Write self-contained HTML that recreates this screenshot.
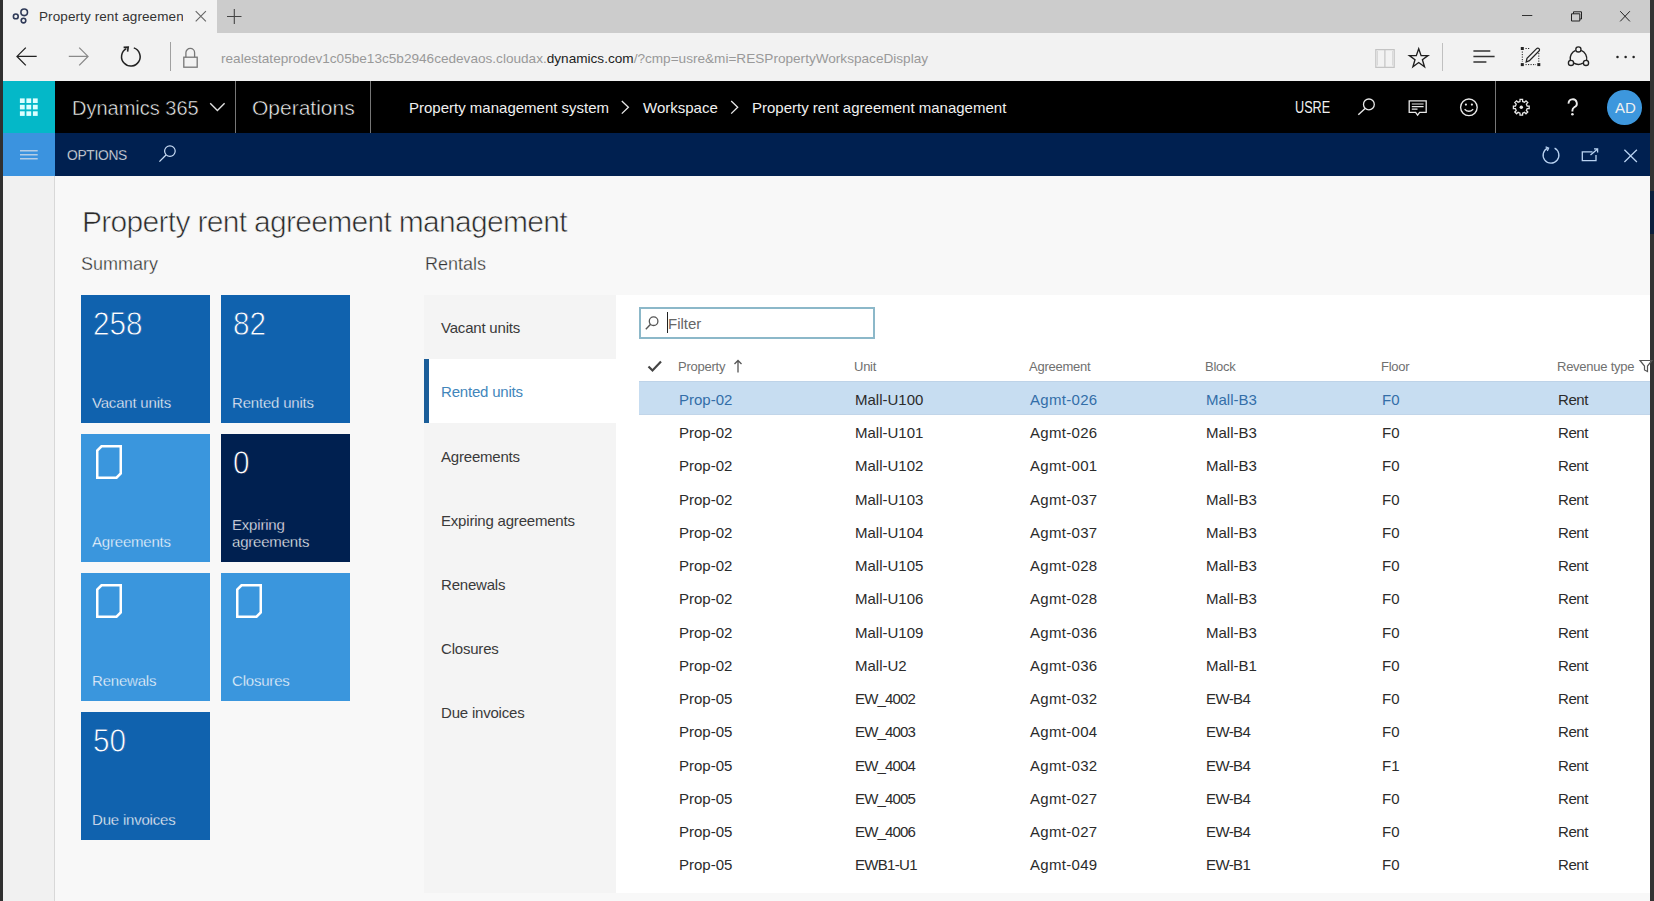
<!DOCTYPE html>
<html><head><meta charset="utf-8">
<style>
*{margin:0;padding:0;box-sizing:border-box}
html,body{width:1654px;height:901px;overflow:hidden;background:#f8f8f8;font-family:"Liberation Sans",sans-serif}
.a{position:absolute}
.t{position:absolute;white-space:nowrap;line-height:1}
svg{position:absolute;overflow:visible}
</style></head><body>
<!-- window borders -->
<div class="a" style="left:0;top:0;width:3px;height:901px;background:#303030"></div>
<div class="a" style="left:1650px;top:0;width:4px;height:901px;background:#333"></div>

<div class="a" style="left:1650px;top:191px;width:4px;height:43px;background:#0c1f3d"></div>
<!-- tab bar -->
<div class="a" style="left:3px;top:0;width:1647px;height:33px;background:#cccccc"></div>
<div class="a" style="left:3px;top:0;width:214px;height:33px;background:#f2f2f2"></div>
<div class="t" style="left:39px;top:9.6px;font-size:13.5px;color:#333;letter-spacing:0.1px;width:144px;height:16px;overflow:hidden">Property rent agreement management</div>

<!-- address bar -->
<div class="a" style="left:3px;top:33px;width:1647px;height:48px;background:#f2f2f2"></div>
<div class="t" style="left:221px;top:51.6px;font-size:13.6px;color:#999">realestateprodev1c05be13c5b2946cedevaos.cloudax.<span style="color:#222">dynamics.com</span>/?cmp=usre&amp;mi=RESPropertyWorkspaceDisplay</div>


<!-- tab icons -->
<svg width="20" height="20" style="left:10px;top:6px" viewBox="10 6 20 20"><circle cx="15.8" cy="16.4" r="2.4" fill="none" stroke="#2f3a58" stroke-width="1.6"/><circle cx="24.2" cy="12.3" r="3.3" fill="none" stroke="#2f3a58" stroke-width="1.6"/><circle cx="23.5" cy="20.6" r="2.3" fill="none" stroke="#2f3a58" stroke-width="1.6"/></svg>
<svg width="20" height="20" style="left:190px;top:6px" viewBox="190 6 20 20"><path d="M195.7 11.2 L205.9 21.4 M205.9 11.2 L195.7 21.4" stroke="#666" stroke-width="1.1"/></svg>
<svg width="20" height="20" style="left:224px;top:6px" viewBox="224 6 20 20"><path d="M234.3 9 V24 M227 16.5 H241.5" stroke="#444" stroke-width="1.1"/></svg>
<svg width="20" height="20" style="left:1518px;top:6px" viewBox="1518 6 20 20"><path d="M1522 15.5 H1532.3" stroke="#333" stroke-width="1"/></svg>
<svg width="20" height="20" style="left:1566px;top:6px" viewBox="1566 6 20 20"><path d="M1571.5 13.8 H1579.8 V21 H1571.5 Z" fill="none" stroke="#222" stroke-width="1"/><path d="M1573.5 13.8 V11.8 H1581.5 V19 H1579.8" fill="none" stroke="#222" stroke-width="1"/></svg>
<svg width="20" height="20" style="left:1615px;top:6px" viewBox="1615 6 20 20"><path d="M1620.2 11.2 L1629.9 21.4 M1629.9 11.2 L1620.2 21.4" stroke="#222" stroke-width="1"/></svg>

<!-- address bar icons -->
<svg width="30" height="30" style="left:12px;top:42px" viewBox="12 42 30 30"><path d="M36.7 56.4 H17.3 M25.8 47.6 L17 56.4 L25.8 65.4" fill="none" stroke="#222" stroke-width="1.3"/></svg>
<svg width="30" height="30" style="left:64px;top:42px" viewBox="64 42 30 30"><path d="M68.8 56.4 H88 M79.2 47.6 L88 56.4 L79.2 65.4" fill="none" stroke="#8a8a8a" stroke-width="1.3"/></svg>
<svg width="30" height="30" style="left:116px;top:42px" viewBox="116 42 30 30"><path d="M133.8 47.9 A9.3 9.3 0 1 1 126.3 48.6" fill="none" stroke="#222" stroke-width="1.5"/><path d="M123.6 47.4 L128.2 47.2 L127.6 51.6" fill="none" stroke="#222" stroke-width="1.6"/></svg>
<div class="a" style="left:170px;top:42px;width:1px;height:29px;background:#a0a0a0"></div>
<svg width="20" height="26" style="left:180px;top:44px" viewBox="180 44 20 26"><rect x="183.8" y="57.2" width="13.4" height="10" fill="none" stroke="#777" stroke-width="1.3"/><path d="M185.9 57.2 V52.8 A4.35 4.35 0 0 1 194.6 52.8 V57.2" fill="none" stroke="#777" stroke-width="1.3"/></svg>

<svg width="24" height="24" style="left:1373px;top:46px" viewBox="1373 46 24 24"><path d="M1375.8 49.6 H1384.9 V67.3 H1375.8 Z M1384.9 49.6 H1394.2 V67.3 H1384.9 Z" fill="none" stroke="#c4c4c4" stroke-width="1.2"/><path d="M1377.5 51 V65.5 M1392.6 51 V65.5" stroke="#d8d8d8" stroke-width="1"/></svg>
<svg width="24" height="24" style="left:1406px;top:46px" viewBox="1406 46 24 24"><path d="M1418.7 48.8 L1421.1 55.6 L1428 55.6 L1422.4 59.8 L1424.5 66.8 L1418.7 62.5 L1412.9 66.8 L1415 59.8 L1409.4 55.6 L1416.3 55.6 Z" fill="none" stroke="#1e1e1e" stroke-width="1.35" stroke-linejoin="miter"/></svg>
<div class="a" style="left:1441.5px;top:42.5px;width:1px;height:28.5px;background:#c0c0c0"></div>
<svg width="26" height="20" style="left:1471px;top:46px" viewBox="1471 46 26 20"><path d="M1473.4 51 H1490.3 M1473.4 56.5 H1494.6 M1473.4 62 H1486.4" stroke="#333" stroke-width="1.5"/></svg>
<svg width="24" height="24" style="left:1518px;top:44px" viewBox="1518 44 24 24"><rect x="1520.8" y="47" width="3" height="3" fill="#222"/><rect x="1520.8" y="63.1" width="3" height="3" fill="#222"/><rect x="1537.3" y="63.1" width="3" height="3" fill="#222"/><path d="M1522.3 51.5 V62 M1525.5 64.6 H1536 M1538.8 53 V62 M1525.5 48.5 H1530" stroke="#222" stroke-width="1" stroke-dasharray="1.2 1.3"/><path d="M1526.2 62 L1527 58.2 L1536.6 48.6 A1.6 1.6 0 0 1 1539 51 L1529.4 60.6 Z" fill="none" stroke="#222" stroke-width="1.25"/></svg>
<svg width="30" height="30" style="left:1564px;top:44px" viewBox="1564 44 30 30"><path d="M1581.2 50.3 A9.2 9.2 0 0 1 1586.6 60.6 M1573.8 63.2 A9.2 9.2 0 0 0 1582.9 63.1 M1570.3 60.4 A9.2 9.2 0 0 1 1575.6 50.3" fill="none" stroke="#222" stroke-width="1.4"/><circle cx="1578.4" cy="49.4" r="2.6" fill="#f2f2f2" stroke="#222" stroke-width="1.35"/><circle cx="1571" cy="62.9" r="2.6" fill="#f2f2f2" stroke="#222" stroke-width="1.35"/><circle cx="1586" cy="62.9" r="2.6" fill="#f2f2f2" stroke="#222" stroke-width="1.35"/></svg>
<svg width="24" height="10" style="left:1614px;top:52px" viewBox="1614 52 24 10"><circle cx="1617.5" cy="57" r="1.25" fill="#222"/><circle cx="1625.6" cy="57" r="1.25" fill="#222"/><circle cx="1633.6" cy="57" r="1.25" fill="#222"/></svg>

<!-- nav bar -->
<div class="a" style="left:3px;top:81px;width:1647px;height:52px;background:#000"></div>
<div class="a" style="left:3px;top:81px;width:51.5px;height:52px;background:#04b8c8"></div>
<div class="t" style="left:72px;top:98px;font-size:20px;color:#f4f4f4;-webkit-text-stroke:0.5px #000">Dynamics 365</div>
<div class="a" style="left:235px;top:81px;width:1px;height:52px;background:#777"></div>
<div class="t" style="left:252px;top:97.2px;font-size:21px;color:#f4f4f4;-webkit-text-stroke:0.5px #000">Operations</div>
<div class="a" style="left:370px;top:81px;width:1px;height:52px;background:#777"></div>
<div class="t" style="left:409px;top:100px;font-size:15px;color:#f0f0f0">Property management system</div>
<div class="t" style="left:643px;top:100px;font-size:15px;color:#f0f0f0">Workspace</div>
<div class="t" style="left:752px;top:100px;font-size:15px;color:#f0f0f0">Property rent agreement management</div>

<svg width="22" height="22" style="left:18px;top:96px" viewBox="18 96 22 22"><g fill="#dcffff"><rect x="19.9" y="98.4" width="4.8" height="4.6"/><rect x="26.4" y="98.4" width="4.8" height="4.6"/><rect x="32.9" y="98.4" width="4.8" height="4.6"/><rect x="19.9" y="104.8" width="4.8" height="4.6"/><rect x="26.4" y="104.8" width="4.8" height="4.6"/><rect x="32.9" y="104.8" width="4.8" height="4.6"/><rect x="19.9" y="111.3" width="4.8" height="4.6"/><rect x="26.4" y="111.3" width="4.8" height="4.6"/><rect x="32.9" y="111.3" width="4.8" height="4.6"/></g></svg>
<svg width="20" height="14" style="left:208px;top:100px" viewBox="208 100 20 14"><path d="M210.2 103.2 L217.4 110.4 L224.6 103.2" fill="none" stroke="#e0e0e0" stroke-width="1.4"/></svg>
<svg width="10" height="16" style="left:619px;top:99px" viewBox="619 99 10 16"><path d="M621.8 101 L628.4 107.3 L621.8 113.6" fill="none" stroke="#e8e8e8" stroke-width="1.3"/></svg>
<svg width="10" height="16" style="left:729px;top:99px" viewBox="729 99 10 16"><path d="M731.2 101 L737.7 107.3 L731.2 113.6" fill="none" stroke="#e8e8e8" stroke-width="1.3"/></svg>
<svg width="22" height="22" style="left:1356px;top:96px" viewBox="1356 96 22 22"><circle cx="1368.9" cy="104.4" r="5.4" fill="none" stroke="#e8e8e8" stroke-width="1.3"/><path d="M1365.1 108.4 L1358.3 114.8" stroke="#e8e8e8" stroke-width="1.4"/></svg>
<svg width="22" height="22" style="left:1406px;top:96px" viewBox="1406 96 22 22"><path d="M1409.2 100.8 H1426.2 V112.3 H1419.6 L1417.6 115.2 L1415.6 112.3 H1409.2 Z" fill="none" stroke="#e8e8e8" stroke-width="1.3"/><path d="M1411.8 104 H1423.6 M1411.8 106.6 H1423.6 M1411.8 109.1 H1417.5" stroke="#e8e8e8" stroke-width="1.1"/></svg>
<svg width="22" height="22" style="left:1458px;top:96px" viewBox="1458 96 22 22"><circle cx="1468.9" cy="107.3" r="8.3" fill="none" stroke="#e8e8e8" stroke-width="1.35"/><circle cx="1465.9" cy="104.6" r="1.1" fill="#e8e8e8"/><circle cx="1471.9" cy="104.6" r="1.1" fill="#e8e8e8"/><path d="M1464.6 109.2 Q1468.9 113.4 1473.2 109.2" fill="none" stroke="#e8e8e8" stroke-width="1.3"/></svg>
<svg width="22" height="22" style="left:1510px;top:96px" viewBox="1510 96 22 22"><path d="M1527.16 105.99 L1529.20 106.03 L1529.20 108.57 L1527.16 108.61 L1526.37 110.51 L1527.79 111.98 L1525.98 113.79 L1524.51 112.37 L1522.61 113.16 L1522.57 115.20 L1520.03 115.20 L1519.99 113.16 L1518.09 112.37 L1516.62 113.79 L1514.81 111.98 L1516.23 110.51 L1515.44 108.61 L1513.40 108.57 L1513.40 106.03 L1515.44 105.99 L1516.23 104.09 L1514.81 102.62 L1516.62 100.81 L1518.09 102.23 L1519.99 101.44 L1520.03 99.40 L1522.57 99.40 L1522.61 101.44 L1524.51 102.23 L1525.98 100.81 L1527.79 102.62 L1526.37 104.09 Z" fill="none" stroke="#e8e8e8" stroke-width="1.3"/><circle cx="1521.3" cy="107.3" r="1.7" fill="#e8e8e8"/></svg>
<svg width="16" height="20" style="left:1564px;top:97px" viewBox="1564 97 16 20"><path d="M1568.6 103.6 A4.1 4.1 0 1 1 1574.3 107.2 C1572.8 108.1 1572.4 109 1572.4 110.6 V111.6" fill="none" stroke="#ececec" stroke-width="1.9"/><circle cx="1572.4" cy="114.2" r="1.3" fill="#ececec"/></svg>
<div class="t" style="left:1295px;top:99.5px;font-size:16px;color:#f0f0f0;transform:scaleX(0.79);transform-origin:0 0">USRE</div>
<div class="a" style="left:1495px;top:81px;width:1px;height:52px;background:#777"></div>
<div class="a" style="left:1607px;top:90px;width:34.5px;height:34.5px;border-radius:50%;background:#3d97dd"></div>
<div class="t" style="left:1615px;top:100px;font-size:15px;color:#f0f0f0">AD</div>

<!-- options bar -->
<div class="a" style="left:3px;top:133px;width:1647px;height:43px;background:#002050"></div>
<div class="a" style="left:3px;top:133px;width:51.5px;height:43px;background:#3b93df"></div>
<div class="t" style="left:67px;top:149.4px;font-size:13.8px;color:#f4f4f4;letter-spacing:-0.3px;-webkit-text-stroke:0.3px #002050">OPTIONS</div>
<svg width="22" height="14" style="left:18px;top:148px" viewBox="18 148 22 14"><path d="M20 150.7 H37.7 M20 154.7 H37.7 M20 158.8 H37.7" stroke="#b4cde6" stroke-width="1.5"/></svg>
<svg width="22" height="22" style="left:156px;top:142px" viewBox="156 142 22 22"><circle cx="169.9" cy="151.1" r="5.3" fill="none" stroke="#c8dcf5" stroke-width="1.2"/><path d="M166 155 L159.4 161.6" stroke="#c8dcf5" stroke-width="1.3"/></svg>
<svg width="22" height="22" style="left:1540px;top:144px" viewBox="1540 144 22 22"><path d="M1554.6 148.2 A7.9 7.9 0 1 1 1547.6 148.1" fill="none" stroke="#b9d3f2" stroke-width="1.3"/><path d="M1545.6 146.8 L1548.6 148 L1547.3 151" fill="none" stroke="#b9d3f2" stroke-width="1.3"/></svg>
<svg width="22" height="22" style="left:1578px;top:144px" viewBox="1578 144 22 22"><path d="M1592.5 151.8 H1582.3 V160.6 H1596 V155" fill="none" stroke="#b9d3f2" stroke-width="1.3"/><path d="M1590.5 155 L1597.6 148.9 M1594 148.9 H1597.6 V152.4" fill="none" stroke="#b9d3f2" stroke-width="1.3"/></svg>
<svg width="22" height="22" style="left:1620px;top:144px" viewBox="1620 144 22 22"><path d="M1624.4 149.8 L1636.9 162 M1636.9 149.8 L1624.4 162" stroke="#b9d3f2" stroke-width="1.25"/></svg>


<!-- side bar -->
<div class="a" style="left:3px;top:176px;width:52px;height:725px;background:#f1f1f1;border-right:1px solid #d8d8d8"></div>

<!-- content -->
<div class="t" style="left:82px;top:207.3px;font-size:30px;color:#2a2a2a;letter-spacing:-0.7px;-webkit-text-stroke:0.65px #f8f8f8">Property rent agreement management</div>
<div class="t" style="left:81px;top:255.3px;font-size:18px;color:#333;-webkit-text-stroke:0.3px #f8f8f8">Summary</div>
<div class="t" style="left:425px;top:255.3px;font-size:18px;color:#333;-webkit-text-stroke:0.3px #f8f8f8">Rentals</div>

<div class="a" style="left:81px;top:295px;width:128.8px;height:128.3px;background:#1062ae"><div class="t" style="left:11.5px;top:12.2px;font-size:33px;color:#fff;transform:scaleX(0.9);transform-origin:0 0;-webkit-text-stroke:0.8px #1062ae">258</div><div class="t" style="left:11px;top:99.6px;font-size:15px;color:#fff;letter-spacing:-0.2px;-webkit-text-stroke:0.35px #1062ae">Vacant units</div></div>
<div class="a" style="left:221px;top:295px;width:128.8px;height:128.3px;background:#1062ae"><div class="t" style="left:11.5px;top:12.2px;font-size:33px;color:#fff;transform:scaleX(0.9);transform-origin:0 0;-webkit-text-stroke:0.8px #1062ae">82</div><div class="t" style="left:11px;top:99.6px;font-size:15px;color:#fff;letter-spacing:-0.2px;-webkit-text-stroke:0.35px #1062ae">Rented units</div></div>
<div class="a" style="left:81px;top:434px;width:128.8px;height:128.3px;background:#3a96dd"><svg width="28" height="36" style="left:15px;top:11px" viewBox="0 0 28 36"><path d="M5.5 1.25 H24.75 V28.5 L20.5 32.75 H1.25 V5.5 Z" fill="none" stroke="#fff" stroke-width="2.5" stroke-linejoin="miter"/></svg><div class="t" style="left:11px;top:99.6px;font-size:15px;color:#fff;letter-spacing:-0.2px;-webkit-text-stroke:0.35px #3a96dd">Agreements</div></div>
<div class="a" style="left:221px;top:434px;width:128.8px;height:128.3px;background:#002050"><div class="t" style="left:11.5px;top:12.2px;font-size:33px;color:#fff;transform:scaleX(0.9);transform-origin:0 0;-webkit-text-stroke:0.8px #002050">0</div><div class="a" style="left:11px;top:82.1px;font-size:15px;line-height:17px;color:#fff;white-space:nowrap;letter-spacing:-0.2px;-webkit-text-stroke:0.35px #002050">Expiring<br>agreements</div></div>
<div class="a" style="left:81px;top:573px;width:128.8px;height:128.3px;background:#3a96dd"><svg width="28" height="36" style="left:15px;top:11px" viewBox="0 0 28 36"><path d="M5.5 1.25 H24.75 V28.5 L20.5 32.75 H1.25 V5.5 Z" fill="none" stroke="#fff" stroke-width="2.5" stroke-linejoin="miter"/></svg><div class="t" style="left:11px;top:99.6px;font-size:15px;color:#fff;letter-spacing:-0.2px;-webkit-text-stroke:0.35px #3a96dd">Renewals</div></div>
<div class="a" style="left:221px;top:573px;width:128.8px;height:128.3px;background:#3a96dd"><svg width="28" height="36" style="left:15px;top:11px" viewBox="0 0 28 36"><path d="M5.5 1.25 H24.75 V28.5 L20.5 32.75 H1.25 V5.5 Z" fill="none" stroke="#fff" stroke-width="2.5" stroke-linejoin="miter"/></svg><div class="t" style="left:11px;top:99.6px;font-size:15px;color:#fff;letter-spacing:-0.2px;-webkit-text-stroke:0.35px #3a96dd">Closures</div></div>
<div class="a" style="left:81px;top:712px;width:128.8px;height:128.3px;background:#1062ae"><div class="t" style="left:11.5px;top:12.2px;font-size:33px;color:#fff;transform:scaleX(0.9);transform-origin:0 0;-webkit-text-stroke:0.8px #1062ae">50</div><div class="t" style="left:11px;top:99.6px;font-size:15px;color:#fff;letter-spacing:-0.2px;-webkit-text-stroke:0.35px #1062ae">Due invoices</div></div>
<div class="a" style="left:424px;top:295px;width:192px;height:597.5px;background:#f4f4f4"></div>
<div class="t" style="left:441px;top:320.1px;font-size:15px;color:#3a3a3a;letter-spacing:-0.2px">Vacant units</div>
<div class="a" style="left:424px;top:359.2px;width:192px;height:64.2px;background:#fff"></div>
<div class="a" style="left:424px;top:359.2px;width:5px;height:64.2px;background:#1b5e99"></div>
<div class="t" style="left:441px;top:384.3px;font-size:15px;color:#4286bb;letter-spacing:-0.2px">Rented units</div>
<div class="t" style="left:441px;top:448.5px;font-size:15px;color:#3a3a3a;letter-spacing:-0.2px">Agreements</div>
<div class="t" style="left:441px;top:512.7px;font-size:15px;color:#3a3a3a;letter-spacing:-0.2px">Expiring agreements</div>
<div class="t" style="left:441px;top:576.9px;font-size:15px;color:#3a3a3a;letter-spacing:-0.2px">Renewals</div>
<div class="t" style="left:441px;top:641.1px;font-size:15px;color:#3a3a3a;letter-spacing:-0.2px">Closures</div>
<div class="t" style="left:441px;top:705.3px;font-size:15px;color:#3a3a3a;letter-spacing:-0.2px">Due invoices</div>
<div class="a" style="left:616px;top:295px;width:1034px;height:597.5px;background:#fff"></div>
<div class="a" style="left:638.5px;top:307px;width:236px;height:31.5px;border:2px solid #8cb8c9;background:#fff"></div>
<div class="t" style="left:668px;top:316.3px;font-size:15px;color:#666">Filter</div>
<div class="a" style="left:667px;top:312px;width:1px;height:21px;background:#222"></div>
<svg width="16" height="16" style="left:644px;top:315px" viewBox="0 0 16 16"><circle cx="9.6" cy="6.2" r="4.3" fill="none" stroke="#555" stroke-width="1.3"/><path d="M6.6 9.3 L1.8 14.2" stroke="#555" stroke-width="1.4"/></svg>
<div class="t" style="left:678px;top:360.2px;font-size:13px;color:#707070;letter-spacing:-0.25px">Property</div>
<div class="t" style="left:854px;top:360.2px;font-size:13px;color:#707070;letter-spacing:-0.25px">Unit</div>
<div class="t" style="left:1029px;top:360.2px;font-size:13px;color:#707070;letter-spacing:-0.25px">Agreement</div>
<div class="t" style="left:1205px;top:360.2px;font-size:13px;color:#707070;letter-spacing:-0.25px">Block</div>
<div class="t" style="left:1381px;top:360.2px;font-size:13px;color:#707070;letter-spacing:-0.25px">Floor</div>
<div class="t" style="left:1557px;top:360.2px;font-size:13px;color:#707070;letter-spacing:-0.25px">Revenue type</div>
<svg width="16" height="14" style="left:647px;top:359px" viewBox="0 0 16 14"><path d="M1.5 7.5 L5.5 11.5 L14 2.5" fill="none" stroke="#444" stroke-width="2.2"/></svg>
<svg width="10" height="14" style="left:733px;top:359px" viewBox="0 0 10 14"><path d="M5 13.5 V1.5 M1.5 5 L5 1.5 L8.5 5" fill="none" stroke="#555" stroke-width="1.3"/></svg>
<svg width="14" height="14" style="left:1639px;top:359px" viewBox="0 0 14 14"><path d="M1 1.5 H13 L8.5 7 V12.5 L5.5 11 V7 Z" fill="none" stroke="#555" stroke-width="1.2"/></svg>
<div class="a" style="left:639px;top:381px;width:1011px;height:33.7px;background:#c7ddf1;border-top:1px solid #bed3e8;border-bottom:1px solid #c1d5e9"></div>
<div class="t" style="left:679px;top:391.90px;font-size:15px;color:#336ea8">Prop-02</div>
<div class="t" style="left:855px;top:391.90px;font-size:15px;color:#2b2b2b">Mall-U100</div>
<div class="t" style="left:1030px;top:391.90px;font-size:15px;color:#336ea8;letter-spacing:0.3px">Agmt-026</div>
<div class="t" style="left:1206px;top:391.90px;font-size:15px;color:#336ea8">Mall-B3</div>
<div class="t" style="left:1382px;top:391.90px;font-size:15px;color:#336ea8">F0</div>
<div class="t" style="left:1558px;top:391.90px;font-size:15px;color:#2b2b2b;letter-spacing:-0.4px">Rent</div>
<div class="t" style="left:679px;top:425.15px;font-size:15px;color:#2b2b2b">Prop-02</div>
<div class="t" style="left:855px;top:425.15px;font-size:15px;color:#2b2b2b">Mall-U101</div>
<div class="t" style="left:1030px;top:425.15px;font-size:15px;color:#2b2b2b;letter-spacing:0.3px">Agmt-026</div>
<div class="t" style="left:1206px;top:425.15px;font-size:15px;color:#2b2b2b">Mall-B3</div>
<div class="t" style="left:1382px;top:425.15px;font-size:15px;color:#2b2b2b">F0</div>
<div class="t" style="left:1558px;top:425.15px;font-size:15px;color:#2b2b2b;letter-spacing:-0.4px">Rent</div>
<div class="t" style="left:679px;top:458.40px;font-size:15px;color:#2b2b2b">Prop-02</div>
<div class="t" style="left:855px;top:458.40px;font-size:15px;color:#2b2b2b">Mall-U102</div>
<div class="t" style="left:1030px;top:458.40px;font-size:15px;color:#2b2b2b;letter-spacing:0.3px">Agmt-001</div>
<div class="t" style="left:1206px;top:458.40px;font-size:15px;color:#2b2b2b">Mall-B3</div>
<div class="t" style="left:1382px;top:458.40px;font-size:15px;color:#2b2b2b">F0</div>
<div class="t" style="left:1558px;top:458.40px;font-size:15px;color:#2b2b2b;letter-spacing:-0.4px">Rent</div>
<div class="t" style="left:679px;top:491.65px;font-size:15px;color:#2b2b2b">Prop-02</div>
<div class="t" style="left:855px;top:491.65px;font-size:15px;color:#2b2b2b">Mall-U103</div>
<div class="t" style="left:1030px;top:491.65px;font-size:15px;color:#2b2b2b;letter-spacing:0.3px">Agmt-037</div>
<div class="t" style="left:1206px;top:491.65px;font-size:15px;color:#2b2b2b">Mall-B3</div>
<div class="t" style="left:1382px;top:491.65px;font-size:15px;color:#2b2b2b">F0</div>
<div class="t" style="left:1558px;top:491.65px;font-size:15px;color:#2b2b2b;letter-spacing:-0.4px">Rent</div>
<div class="t" style="left:679px;top:524.90px;font-size:15px;color:#2b2b2b">Prop-02</div>
<div class="t" style="left:855px;top:524.90px;font-size:15px;color:#2b2b2b">Mall-U104</div>
<div class="t" style="left:1030px;top:524.90px;font-size:15px;color:#2b2b2b;letter-spacing:0.3px">Agmt-037</div>
<div class="t" style="left:1206px;top:524.90px;font-size:15px;color:#2b2b2b">Mall-B3</div>
<div class="t" style="left:1382px;top:524.90px;font-size:15px;color:#2b2b2b">F0</div>
<div class="t" style="left:1558px;top:524.90px;font-size:15px;color:#2b2b2b;letter-spacing:-0.4px">Rent</div>
<div class="t" style="left:679px;top:558.15px;font-size:15px;color:#2b2b2b">Prop-02</div>
<div class="t" style="left:855px;top:558.15px;font-size:15px;color:#2b2b2b">Mall-U105</div>
<div class="t" style="left:1030px;top:558.15px;font-size:15px;color:#2b2b2b;letter-spacing:0.3px">Agmt-028</div>
<div class="t" style="left:1206px;top:558.15px;font-size:15px;color:#2b2b2b">Mall-B3</div>
<div class="t" style="left:1382px;top:558.15px;font-size:15px;color:#2b2b2b">F0</div>
<div class="t" style="left:1558px;top:558.15px;font-size:15px;color:#2b2b2b;letter-spacing:-0.4px">Rent</div>
<div class="t" style="left:679px;top:591.40px;font-size:15px;color:#2b2b2b">Prop-02</div>
<div class="t" style="left:855px;top:591.40px;font-size:15px;color:#2b2b2b">Mall-U106</div>
<div class="t" style="left:1030px;top:591.40px;font-size:15px;color:#2b2b2b;letter-spacing:0.3px">Agmt-028</div>
<div class="t" style="left:1206px;top:591.40px;font-size:15px;color:#2b2b2b">Mall-B3</div>
<div class="t" style="left:1382px;top:591.40px;font-size:15px;color:#2b2b2b">F0</div>
<div class="t" style="left:1558px;top:591.40px;font-size:15px;color:#2b2b2b;letter-spacing:-0.4px">Rent</div>
<div class="t" style="left:679px;top:624.65px;font-size:15px;color:#2b2b2b">Prop-02</div>
<div class="t" style="left:855px;top:624.65px;font-size:15px;color:#2b2b2b">Mall-U109</div>
<div class="t" style="left:1030px;top:624.65px;font-size:15px;color:#2b2b2b;letter-spacing:0.3px">Agmt-036</div>
<div class="t" style="left:1206px;top:624.65px;font-size:15px;color:#2b2b2b">Mall-B3</div>
<div class="t" style="left:1382px;top:624.65px;font-size:15px;color:#2b2b2b">F0</div>
<div class="t" style="left:1558px;top:624.65px;font-size:15px;color:#2b2b2b;letter-spacing:-0.4px">Rent</div>
<div class="t" style="left:679px;top:657.90px;font-size:15px;color:#2b2b2b">Prop-02</div>
<div class="t" style="left:855px;top:657.90px;font-size:15px;color:#2b2b2b">Mall-U2</div>
<div class="t" style="left:1030px;top:657.90px;font-size:15px;color:#2b2b2b;letter-spacing:0.3px">Agmt-036</div>
<div class="t" style="left:1206px;top:657.90px;font-size:15px;color:#2b2b2b">Mall-B1</div>
<div class="t" style="left:1382px;top:657.90px;font-size:15px;color:#2b2b2b">F0</div>
<div class="t" style="left:1558px;top:657.90px;font-size:15px;color:#2b2b2b;letter-spacing:-0.4px">Rent</div>
<div class="t" style="left:679px;top:691.15px;font-size:15px;color:#2b2b2b">Prop-05</div>
<div class="t" style="left:855px;top:691.15px;font-size:15px;color:#2b2b2b;letter-spacing:-0.85px">EW_4002</div>
<div class="t" style="left:1030px;top:691.15px;font-size:15px;color:#2b2b2b;letter-spacing:0.3px">Agmt-032</div>
<div class="t" style="left:1206px;top:691.15px;font-size:15px;color:#2b2b2b;letter-spacing:-0.6px">EW-B4</div>
<div class="t" style="left:1382px;top:691.15px;font-size:15px;color:#2b2b2b">F0</div>
<div class="t" style="left:1558px;top:691.15px;font-size:15px;color:#2b2b2b;letter-spacing:-0.4px">Rent</div>
<div class="t" style="left:679px;top:724.40px;font-size:15px;color:#2b2b2b">Prop-05</div>
<div class="t" style="left:855px;top:724.40px;font-size:15px;color:#2b2b2b;letter-spacing:-0.85px">EW_4003</div>
<div class="t" style="left:1030px;top:724.40px;font-size:15px;color:#2b2b2b;letter-spacing:0.3px">Agmt-004</div>
<div class="t" style="left:1206px;top:724.40px;font-size:15px;color:#2b2b2b;letter-spacing:-0.6px">EW-B4</div>
<div class="t" style="left:1382px;top:724.40px;font-size:15px;color:#2b2b2b">F0</div>
<div class="t" style="left:1558px;top:724.40px;font-size:15px;color:#2b2b2b;letter-spacing:-0.4px">Rent</div>
<div class="t" style="left:679px;top:757.65px;font-size:15px;color:#2b2b2b">Prop-05</div>
<div class="t" style="left:855px;top:757.65px;font-size:15px;color:#2b2b2b;letter-spacing:-0.85px">EW_4004</div>
<div class="t" style="left:1030px;top:757.65px;font-size:15px;color:#2b2b2b;letter-spacing:0.3px">Agmt-032</div>
<div class="t" style="left:1206px;top:757.65px;font-size:15px;color:#2b2b2b;letter-spacing:-0.6px">EW-B4</div>
<div class="t" style="left:1382px;top:757.65px;font-size:15px;color:#2b2b2b">F1</div>
<div class="t" style="left:1558px;top:757.65px;font-size:15px;color:#2b2b2b;letter-spacing:-0.4px">Rent</div>
<div class="t" style="left:679px;top:790.90px;font-size:15px;color:#2b2b2b">Prop-05</div>
<div class="t" style="left:855px;top:790.90px;font-size:15px;color:#2b2b2b;letter-spacing:-0.85px">EW_4005</div>
<div class="t" style="left:1030px;top:790.90px;font-size:15px;color:#2b2b2b;letter-spacing:0.3px">Agmt-027</div>
<div class="t" style="left:1206px;top:790.90px;font-size:15px;color:#2b2b2b;letter-spacing:-0.6px">EW-B4</div>
<div class="t" style="left:1382px;top:790.90px;font-size:15px;color:#2b2b2b">F0</div>
<div class="t" style="left:1558px;top:790.90px;font-size:15px;color:#2b2b2b;letter-spacing:-0.4px">Rent</div>
<div class="t" style="left:679px;top:824.15px;font-size:15px;color:#2b2b2b">Prop-05</div>
<div class="t" style="left:855px;top:824.15px;font-size:15px;color:#2b2b2b;letter-spacing:-0.85px">EW_4006</div>
<div class="t" style="left:1030px;top:824.15px;font-size:15px;color:#2b2b2b;letter-spacing:0.3px">Agmt-027</div>
<div class="t" style="left:1206px;top:824.15px;font-size:15px;color:#2b2b2b;letter-spacing:-0.6px">EW-B4</div>
<div class="t" style="left:1382px;top:824.15px;font-size:15px;color:#2b2b2b">F0</div>
<div class="t" style="left:1558px;top:824.15px;font-size:15px;color:#2b2b2b;letter-spacing:-0.4px">Rent</div>
<div class="t" style="left:679px;top:857.40px;font-size:15px;color:#2b2b2b">Prop-05</div>
<div class="t" style="left:855px;top:857.40px;font-size:15px;color:#2b2b2b;letter-spacing:-0.7px">EWB1-U1</div>
<div class="t" style="left:1030px;top:857.40px;font-size:15px;color:#2b2b2b;letter-spacing:0.3px">Agmt-049</div>
<div class="t" style="left:1206px;top:857.40px;font-size:15px;color:#2b2b2b;letter-spacing:-0.6px">EW-B1</div>
<div class="t" style="left:1382px;top:857.40px;font-size:15px;color:#2b2b2b">F0</div>
<div class="t" style="left:1558px;top:857.40px;font-size:15px;color:#2b2b2b;letter-spacing:-0.4px">Rent</div>
</body></html>
